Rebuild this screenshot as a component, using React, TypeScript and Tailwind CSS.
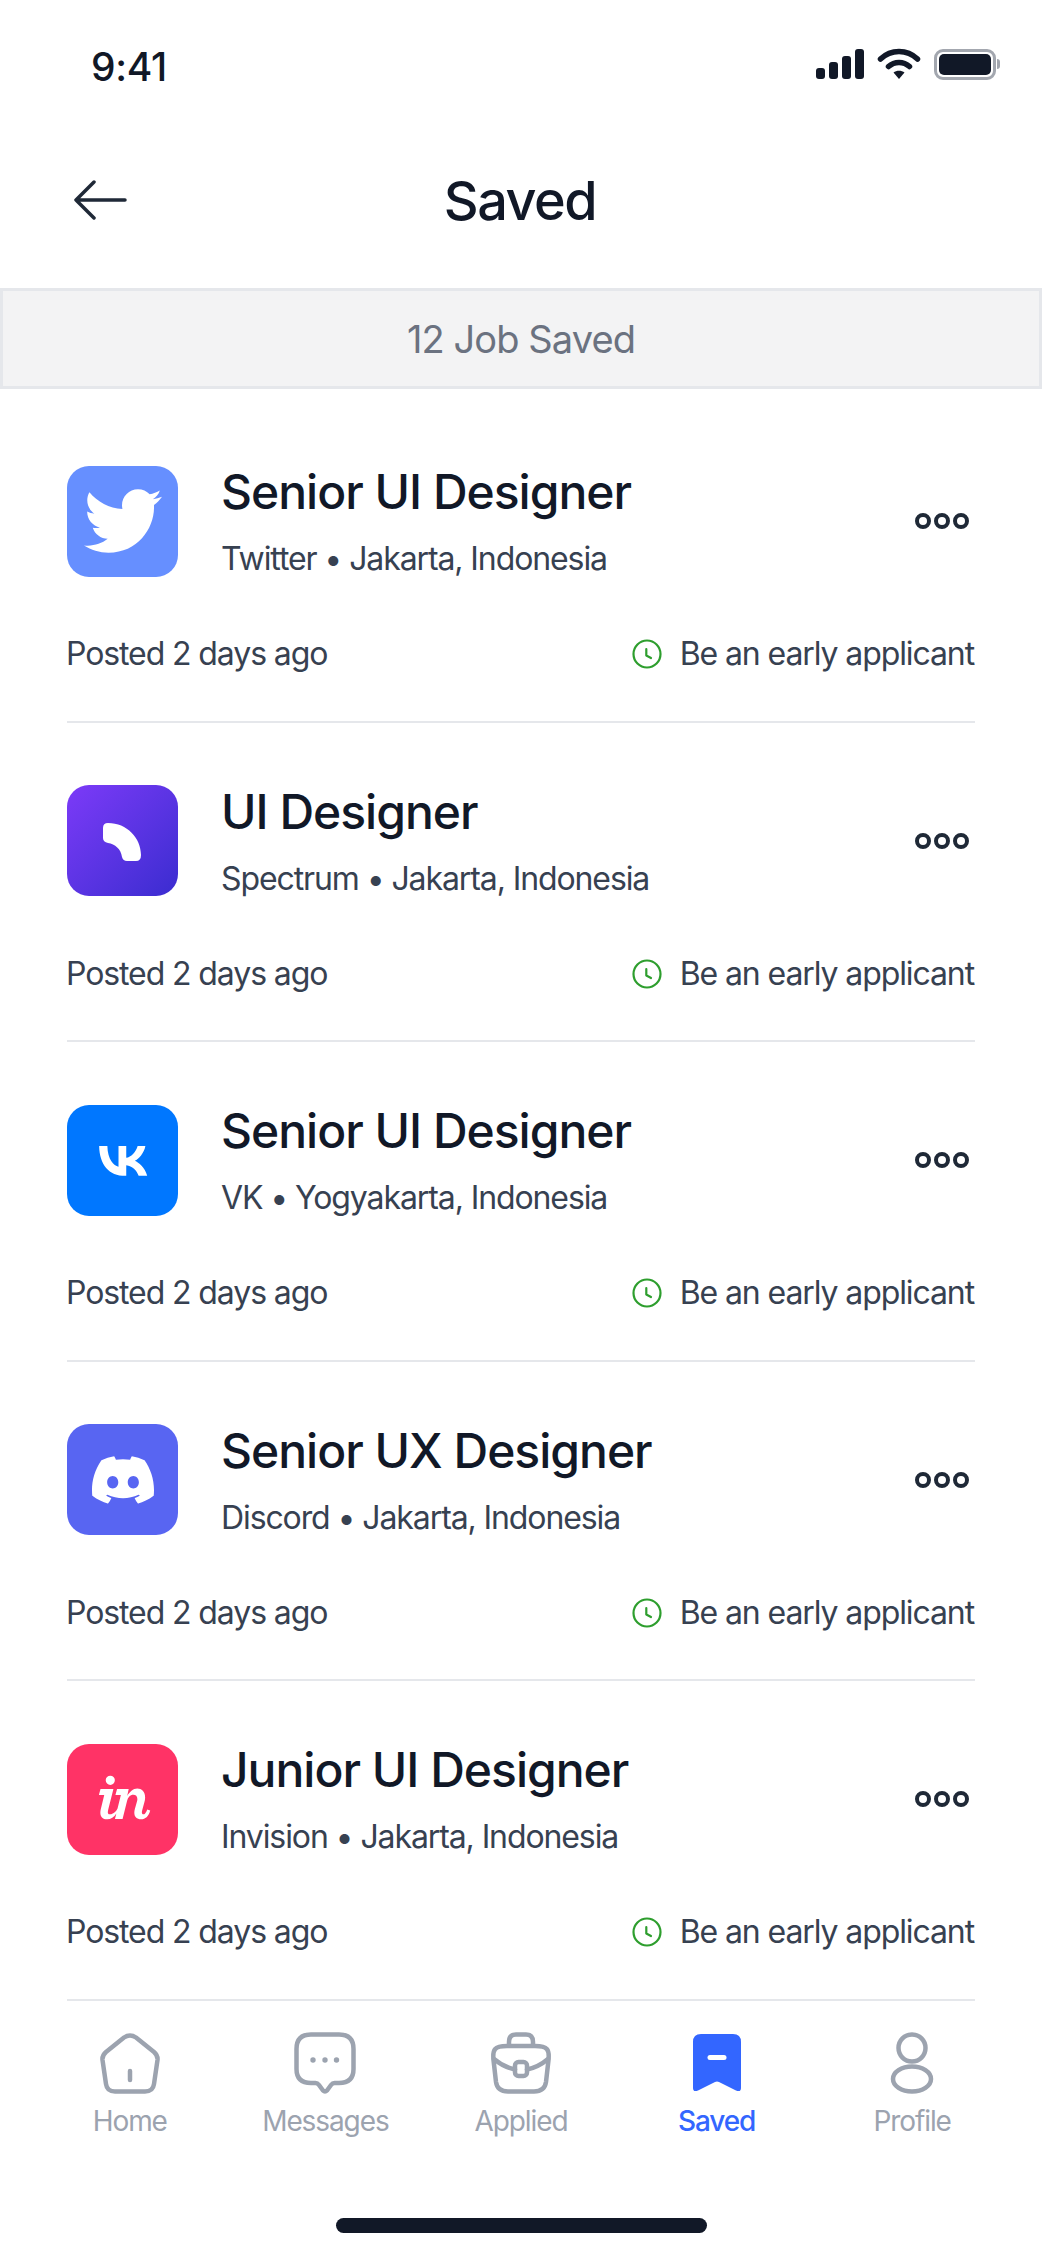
import { SiDiscord, SiInvision, SiVk } from 'react-icons/si';
import { FaTwitter } from 'react-icons/fa';
import type { ReactNode } from 'react';

function Twitter() {
  return (
    <div className="size-[111px] rounded-[22px] bg-[#668fff] flex items-center justify-center">
      <FaTwitter className="size-[78px] text-white" />
    </div>
  );
}

function Spectrum() {
  return (
    <div className="size-[111px] rounded-[22px] bg-linear-to-br from-[#7c3af8] to-[#3a2cd0]">
      <svg viewBox="0 0 111 111" className="size-full">
        <path d="M41 38C60 38 74 53 74 70Q74 76 69 76H60Q56 76 55 72C54 64 48 59 41 58Q36 57 36 53V43Q36 38 41 38Z" fill="#fff" />
      </svg>
    </div>
  );
}

function Vk() {
  return (
    <div className="size-[111px] rounded-[22px] bg-[#0077ff] flex items-center justify-center">
      <div className="size-[60px] bg-white overflow-hidden flex items-center justify-center">
        <SiVk className="size-full shrink-0 text-[#0077ff] scale-[1.2]" />
      </div>
    </div>
  );
}

function Discord() {
  return (
    <div className="size-[111px] rounded-[22px] bg-[#5865f2] flex items-center justify-center">
      <SiDiscord className="size-[62px] text-white" />
    </div>
  );
}

function Invision() {
  return (
    <div className="size-[111px] rounded-[22px] bg-[#ff3366] flex items-center justify-center">
      <div className="size-[66px] bg-white overflow-hidden flex items-center justify-center">
        <SiInvision className="size-full shrink-0 text-[#ff3366] scale-[1.2]" />
      </div>
    </div>
  );
}

const jobs: { title: string; sub: string; logo: ReactNode }[] = [
  { title: 'Senior UI Designer', sub: 'Twitter • Jakarta, Indonesia', logo: <Twitter /> },
  { title: 'UI Designer', sub: 'Spectrum • Jakarta, Indonesia', logo: <Spectrum /> },
  { title: 'Senior UI Designer', sub: 'VK • Yogyakarta, Indonesia', logo: <Vk /> },
  { title: 'Senior UX Designer', sub: 'Discord • Jakarta, Indonesia', logo: <Discord /> },
  { title: 'Junior UI Designer', sub: 'Invision • Jakarta, Indonesia', logo: <Invision /> },
];

function StatusIcons() {
  return (
    <div className="flex items-center gap-[13px]">
      <svg width="48" height="30" viewBox="0 0 48 30" fill="#111827">
        <rect x="0" y="19" width="9" height="11" rx="3" />
        <rect x="13" y="13" width="9" height="17" rx="3" />
        <rect x="26" y="7" width="9" height="23" rx="3" />
        <rect x="39" y="0" width="9" height="30" rx="3" />
      </svg>
      <svg width="44" height="32" viewBox="0 0 44 32" fill="none" stroke="#111827" strokeWidth="5.5" strokeLinecap="round">
        <path d="M3.5 11C14 1 30 1 40.5 11" />
        <path d="M11.5 18.5C17.5 13 26.5 13 32.5 18.5" />
        <path d="M22 31L16.5 24.5C19.5 22 24.5 22 27.5 24.5Z" fill="#111827" stroke="none" />
      </svg>
      <div className="flex items-center gap-[1px]">
        <div className="w-[62px] h-[31px] rounded-[9px] border-[3px] border-[#a3a7af] p-[2px]">
          <div className="size-full rounded-[5px] bg-[#111827]" />
        </div>
        <div className="w-[3px] h-[10px] rounded-r-full bg-[#a3a7af]" />
      </div>
    </div>
  );
}

function NavIcon({ name }: { name: string }) {
  const stroke = '#9ca3af';
  if (name === 'Home') {
    return (
      <svg width="62" height="62" viewBox="0 0 62 62" fill="none" stroke={stroke} strokeWidth="4.5" strokeLinecap="round" strokeLinejoin="round">
        <path d="M25 5.5Q31 1.5 37 5.5L55 20Q59 23.5 58.5 28L55 52Q54 59.5 46 59.5H16Q8 59.5 7 52L3.5 28Q3 23.5 7 20Z" />
        <path d="M31 39V48" />
      </svg>
    );
  }
  if (name === 'Messages') {
    return (
      <svg width="62" height="62" viewBox="0 0 62 62" fill="none" stroke={stroke} strokeWidth="4.5" strokeLinecap="round" strokeLinejoin="round">
        <path d="M17 2.5H45Q59.5 2.5 59.5 17V37Q59.5 51 45 51H40.5Q38.5 51 37 53L33 58.5Q31 60.5 29 58.5L25 53Q23.5 51 21.5 51H17Q2.5 51 2.5 37V17Q2.5 2.5 17 2.5Z" />
        <circle cx="19" cy="28" r="2.7" fill={stroke} stroke="none" />
        <circle cx="31" cy="28" r="2.7" fill={stroke} stroke="none" />
        <circle cx="42.5" cy="28" r="2.7" fill={stroke} stroke="none" />
      </svg>
    );
  }
  if (name === 'Applied') {
    return (
      <svg width="62" height="62" viewBox="0 0 62 62" fill="none" stroke={stroke} strokeWidth="4.5" strokeLinecap="round" strokeLinejoin="round">
        <path d="M17 14C4 14 2.5 18 3.5 28L6 50C7 57 11 59.5 18 59.5H44C51 59.5 55 57 56 50L58.5 28C59.5 18 58 14 45 14Z" />
        <path d="M19 13V10Q19 2.5 26 2.5H36Q43 2.5 43 10V13" />
        <path d="M4 27C11 33 18 36 25 37.5M37 37.5C44 36 51 33 58 27" />
        <rect x="25" y="30" width="12" height="14" rx="3.5" />
      </svg>
    );
  }
  if (name === 'Saved') {
    return (
      <svg width="62" height="62" viewBox="0 0 62 62" fill="none">
        <path d="M15 2H47Q55 2 55 10V56Q55 60.5 50 58.5L33 50Q31 49 29 50L12 58.5Q7 60.5 7 56V10Q7 2 15 2Z" fill="#3366ff" />
        <path d="M24 25.5H38" stroke="#fff" strokeWidth="5" strokeLinecap="round" />
      </svg>
    );
  }
  return (
    <svg width="62" height="62" viewBox="0 0 62 62" fill="none" stroke={stroke} strokeWidth="4.5">
      <circle cx="31" cy="16" r="13.5" />
      <ellipse cx="31" cy="47" rx="19" ry="12.5" />
    </svg>
  );
}

export default function App() {
  return (
    <div className="min-h-screen bg-white font-['Inter',sans-serif]">
      {/* Status bar */}
      <div className="h-[96px] pt-[48px] pl-[91px] pr-[42px] flex justify-between items-start">
        <span className="text-[39px] leading-[37px] font-medium tracking-[-0.3px] text-[#111827]">9:41</span>
        <StatusIcons />
      </div>

      {/* Header */}
      <header className="h-[192px] pt-[16px] flex items-center pl-[74px] pr-[72px]">
        <svg width="54" height="40" viewBox="0 0 54 40" fill="none" stroke="#1f2937" strokeWidth="3.5" strokeLinecap="round" strokeLinejoin="round">
          <path d="M2 20H51M20 2L2 20L20 38" />
        </svg>
        <h1 className="flex-1 text-center text-[54px] font-medium tracking-[-1.5px] text-[#111827] pr-[58px]">Saved</h1>
      </header>

      {/* Count banner */}
      <div className="h-[101px] pt-[1px] bg-[#f3f3f4] border-[3px] border-[#e5e7eb] flex items-center justify-center text-[38px] tracking-[-0.9px] text-[#6b7280]">
        12 Job Saved
      </div>

      {/* Job list */}
      <main className="pt-[14px] px-[67px]">
        {jobs.map((job, i) => (
          <article key={i} className="h-[319.6px] pt-[60px] border-b-[2px] border-[#e5e7eb]">
            <div className="flex items-center">
              {job.logo}
              <div className="ml-[43px] flex-1">
                <h2 className="text-[48px] leading-[58px] font-medium tracking-[-1px] text-[#111827]">{job.title}</h2>
                <p className="mt-[18px] text-[32px] leading-[40px] tracking-[-1.1px] text-[#374151]">{job.sub}</p>
              </div>
              <div className="flex gap-[3px] mr-[6px]">
                <span className="size-[16px] rounded-full border-[4.5px] border-[#1f2937]" />
                <span className="size-[16px] rounded-full border-[4.5px] border-[#1f2937]" />
                <span className="size-[16px] rounded-full border-[4.5px] border-[#1f2937]" />
              </div>
            </div>
            <div className="mt-[55px] -ml-[1px] mr-[1px] flex justify-between items-center text-[32px] leading-[40px] tracking-[-1.1px] text-[#374151]">
              <span>Posted 2 days ago</span>
              <span className="flex items-center gap-[18px]">
                <svg width="30" height="30" viewBox="0 0 30 30" fill="none" stroke="#2e9e2e" strokeWidth="2.2" strokeLinecap="round" strokeLinejoin="round">
                  <circle cx="15" cy="15" r="13.5" />
                  <path d="M14.3 10V16.5L19 19" />
                </svg>
                Be an early applicant
              </span>
            </div>
          </article>
        ))}
      </main>

      {/* Bottom nav */}
      <nav className="pt-[31px] px-[32px] grid grid-cols-5">
        {['Home', 'Messages', 'Applied', 'Saved', 'Profile'].map((name) => (
          <div key={name} className="flex flex-col items-center">
            <NavIcon name={name} />
            <span className={name === 'Saved' ? 'mt-[7px] text-[28px] leading-[40px] font-medium tracking-[-1.1px] text-[#3366ff]' : 'mt-[7px] text-[28px] leading-[40px] tracking-[-1.1px] text-[#9ca3af]'}>
              {name}
            </span>
          </div>
        ))}
      </nav>

      {/* Home indicator */}
      <div className="mt-[77px] mx-auto w-[371px] h-[15px] rounded-full bg-[#111827]" />
    </div>
  );
}
